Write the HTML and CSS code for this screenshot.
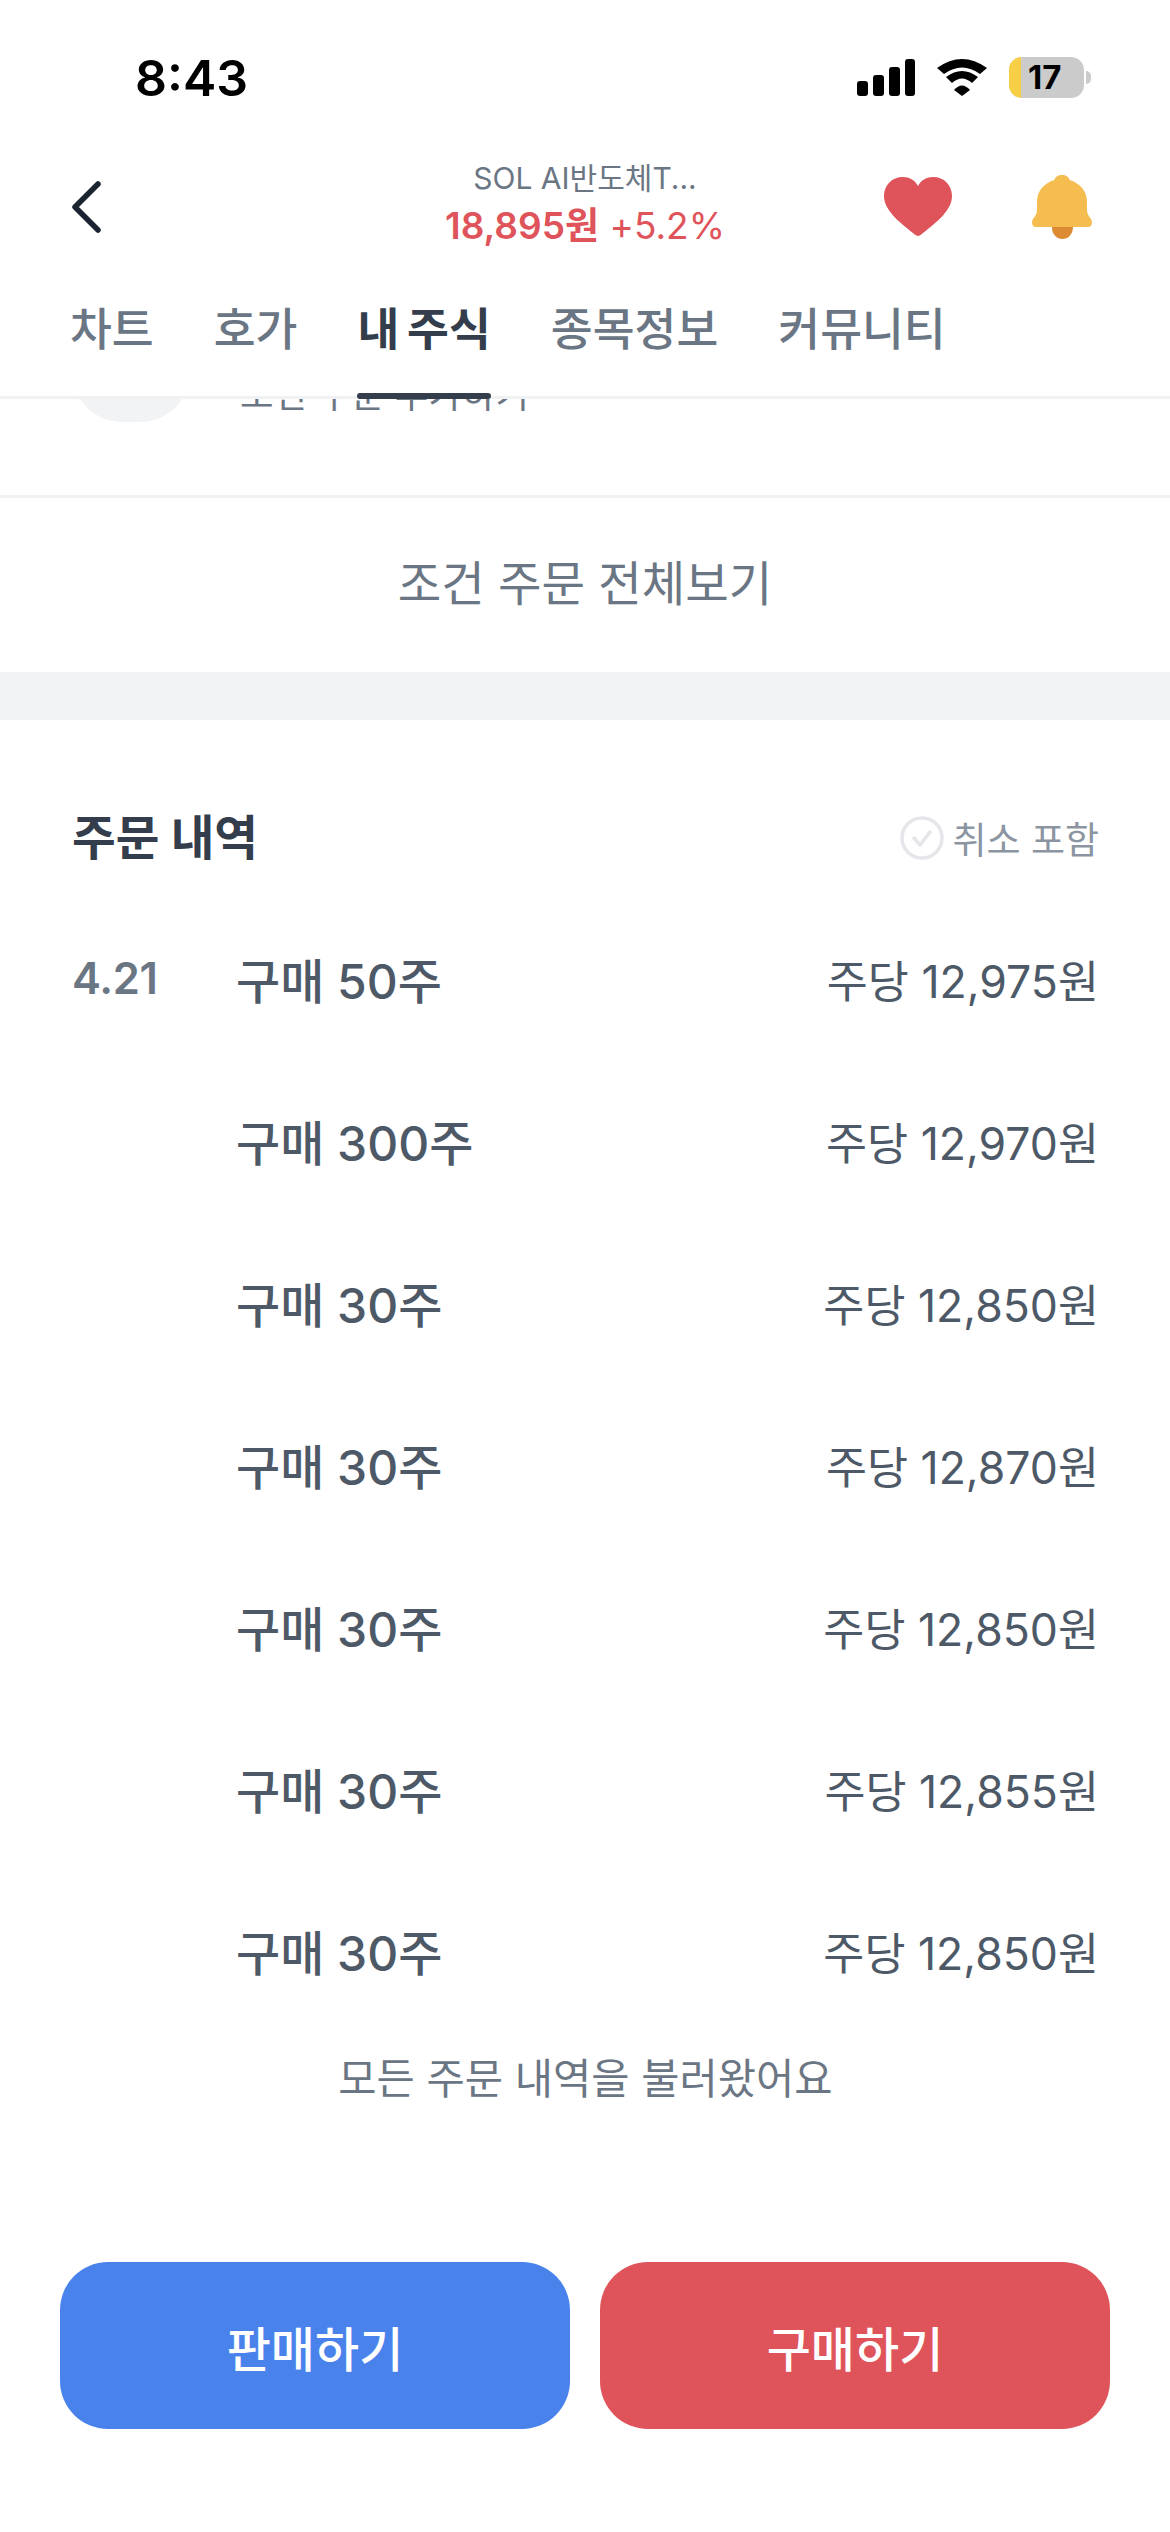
FILE: index.html
```html
<!DOCTYPE html>
<html lang="ko">
<head>
<meta charset="utf-8">
<title>내 주식</title>
<link rel="stylesheet" href="styles.css">
</head>
<body>
<div class="app">
  <header class="top">
    <div class="status">
      <span class="time">8:43</span>
      <div class="status-icons">
        <svg class="signal" width="58" height="37" viewBox="0 0 58 37"><rect x="0" y="22" width="11" height="15" rx="3"/><rect x="16" y="16" width="11" height="21" rx="3"/><rect x="32" y="8" width="11" height="29" rx="3"/><rect x="48" y="0" width="10" height="37" rx="3"/></svg>
        <svg class="wifi" width="50" height="37" viewBox="0 0 50 37"><path d="M0 9Q25-9 50 9L43 15Q25 2 7 15z"/><path d="M9 18Q25 6 41 18L35 24Q25 15 15 24z"/><path d="M17 31Q25 22 33 31L25 37z"/></svg>
        <div class="battery"><div class="battery-body"><span class="battery-fill"></span><span class="battery-num">17</span></div><span class="battery-cap"></span></div>
      </div>
    </div>
    <div class="nav">
      <svg class="back" width="34" height="54" viewBox="0 0 34 54"><path d="M28 4L5 27l23 23" fill="none" stroke="#1b2430" stroke-width="5.5" stroke-linecap="round" stroke-linejoin="round"/></svg>
      <div class="title">
        <div class="name">SOL AI반도체T...</div>
        <div class="price"><b>18,895원</b> +5.2%</div>
      </div>
      <div class="actions">
        <svg width="68" height="60" viewBox="0 0 68 60"><path d="M34 59C33 59 31 58 29 56 15 45 0 33 0 19 0 8 8 0 19 0c6 0 12 3 15 9C37 3 43 0 49 0c11 0 19 8 19 19 0 14-15 26-29 37-2 2-4 3-5 3z" fill="#df535a"/></svg>
        <svg width="60" height="64" viewBox="0 0 60 64"><path d="M20 50h21v3a10.500 11 0 0 1-21 0z" fill="#dd8b32"/><path d="M30 0c4 0 7 2 7.500 5C48 8 55 16 55 27v8c0 4 2 6 4 9s1 8-3 8H4c-4 0-5-5-3-8s4-5 4-9v-8C5 16 12 8 22.500 5 23 2 26 0 30 0z" fill="#f5bd4f"/></svg>
      </div>
    </div>
    <nav class="tabs">
      <span class="tab">차트</span>
      <span class="tab">호가</span>
      <span class="tab active">내 주식</span>
      <span class="tab">종목정보</span>
      <span class="tab">커뮤니티</span>
    </nav>
  </header>
  <main class="scroll">
    <div class="clipped">
      <div class="cond-row">
        <span class="cond-icon"></span>
        <span class="cond-text">조건 주문 추가하기</span>
      </div>
    </div>
    <div class="all-link">조건 주문 전체보기</div>
    <div class="band"></div>
    <section class="orders">
      <div class="orders-head">
        <h2>주문 내역</h2>
        <div class="cancel">
          <svg width="44" height="44" viewBox="0 0 44 44"><circle cx="22" cy="22" r="20" fill="none" stroke="#e4e6ea" stroke-width="3.500"/><path d="M14 22l6 7 10-13" fill="none" stroke="#e4e6ea" stroke-width="3.500" stroke-linecap="round" stroke-linejoin="round"/></svg>
          <span>취소 포함</span>
        </div>
      </div>
      <div class="row"><span class="date">4.21</span><span class="qty">구매 50주</span><span class="unit">주당 12,975원</span></div>
      <div class="row"><span class="date"></span><span class="qty">구매 300주</span><span class="unit">주당 12,970원</span></div>
      <div class="row"><span class="date"></span><span class="qty">구매 30주</span><span class="unit">주당 12,850원</span></div>
      <div class="row"><span class="date"></span><span class="qty">구매 30주</span><span class="unit">주당 12,870원</span></div>
      <div class="row"><span class="date"></span><span class="qty">구매 30주</span><span class="unit">주당 12,850원</span></div>
      <div class="row"><span class="date"></span><span class="qty">구매 30주</span><span class="unit">주당 12,855원</span></div>
      <div class="row"><span class="date"></span><span class="qty">구매 30주</span><span class="unit">주당 12,850원</span></div>
      <p class="end">모든 주문 내역을 불러왔어요</p>
    </section>
  </main>
  <footer class="cta">
    <button class="btn sell">판매하기</button>
    <button class="btn buy">구매하기</button>
  </footer>
</div>
</body>
</html>
```
FILE: styles.css
```css
* { box-sizing: border-box; }
html, body { margin: 0; padding: 0; background: #fff; }
body { font-family: Inter, "Noto Sans CJK KR", sans-serif; color: #4e5968; }
.app { width: 1170px; height: 2532px; display: flex; flex-direction: column; overflow: hidden; }

.top { height: 399px; flex: none; position: relative; border-bottom: 3px solid #f0f1f3; background: #fff; }
.status { height: 160px; display: flex; justify-content: space-between; align-items: flex-start; padding: 50px 79px 0 135px; }
.time { font-size: 50px; font-weight: 600; color: #000; line-height: 56px; }
.status-icons { display: flex; align-items: center; gap: 22px; padding-top: 7px; }
.signal, .wifi { fill: #000; display: block; }
.battery { display: flex; align-items: center; gap: 2px; }
.battery-body { width: 75px; height: 41px; background: #cbcbcb; border-radius: 13px; overflow: hidden; display: flex; align-items: center; }
.battery-fill { width: 12px; height: 100%; background: #f6cf47; flex: none; }
.battery-num { font-size: 33px; font-weight: 700; color: #000; padding-left: 7px; line-height: 41px; }
.battery-cap { width: 5px; height: 13px; background: #cbcbcb; border-radius: 0 6px 6px 0; }

.nav { height: 94px; display: flex; align-items: center; position: relative; padding: 0 78px 0 70px; justify-content: space-between; }
.back { display: block; }
.title { position: absolute; left: 0; right: 0; text-align: center; top: -2px; }
.name { font-size: 30px; line-height: 40px; color: #6b7684; }
.price { font-size: 37px; line-height: 50px; color: #df535a; margin-top: 3px; }
.price b { font-weight: 600; }
.actions { display: flex; align-items: center; gap: 80px; position: relative; }

.tabs { display: flex; gap: 60px; padding: 0 70px; height: 68px; margin-top: 42px; }
.tab { font-size: 45.500px; font-weight: 500; color: #6b7684; line-height: 68px; white-space: nowrap; height: 100%; }
.tab.active { color: #333d4b; font-weight: 700; position: relative; word-spacing: -3px; }
.tab.active::after { content: ""; position: absolute; left: 0; right: 0; bottom: -35px; height: 6px; border-radius: 3px; background: #333d4b; }

.scroll { flex: 1; display: flex; flex-direction: column; overflow: hidden; }
.clipped { height: 99px; flex: none; border-bottom: 3px solid #f0f1f3; overflow: hidden; }
.cond-row { display: flex; gap: 50px; padding-left: 72px; margin-top: -85px; height: 108px; align-items: flex-end; }
.cond-icon { width: 118px; height: 108px; border-radius: 50px; background: #f2f3f5; flex: none; }
.cond-text { font-size: 36.500px; line-height: 50px; margin-bottom: 2px; color: #6b7684; white-space: nowrap; }
.all-link { height: 174px; flex: none; text-align: center; line-height: 172px; font-size: 47.300px; color: #6b7684; }
.band { height: 48px; flex: none; background: #f2f3f5; }

.orders { padding: 0 71px 0 72px; }
.orders-head { display: flex; justify-content: space-between; align-items: center; height: 80px; margin-top: 78px; margin-bottom: 19px; }
.orders-head h2 { margin: 0; font-size: 47.500px; font-weight: 700; color: #333d4b; line-height: 80px; }
.cancel { display: flex; align-items: center; gap: 8px; font-size: 37px; color: #8b95a1; }
.cancel svg { display: block; }
.row { display: flex; align-items: center; height: 162px; }
.date { width: 164px; flex: none; font-size: 43.500px; font-weight: 600; color: #6b7684; letter-spacing: -0.300px; }
.qty { flex: 1; font-size: 48px; font-weight: 500; color: #4e5968; white-space: nowrap; }
.unit { font-size: 44.600px; color: #4e5968; white-space: nowrap; }
.end { margin: 0; text-align: center; font-size: 41.600px; color: #6b7684; line-height: 60px; margin-top: 18px; }

.cta { flex: none; height: 270px; display: flex; gap: 30px; padding: 0 60px 103px; }
.btn { flex: 1; border: 0; border-radius: 48px; color: #fff; font: 500 48px Inter, "Noto Sans CJK KR", sans-serif; }
.sell { background: #4a82ec; }
.buy { background: #df535a; }
```
